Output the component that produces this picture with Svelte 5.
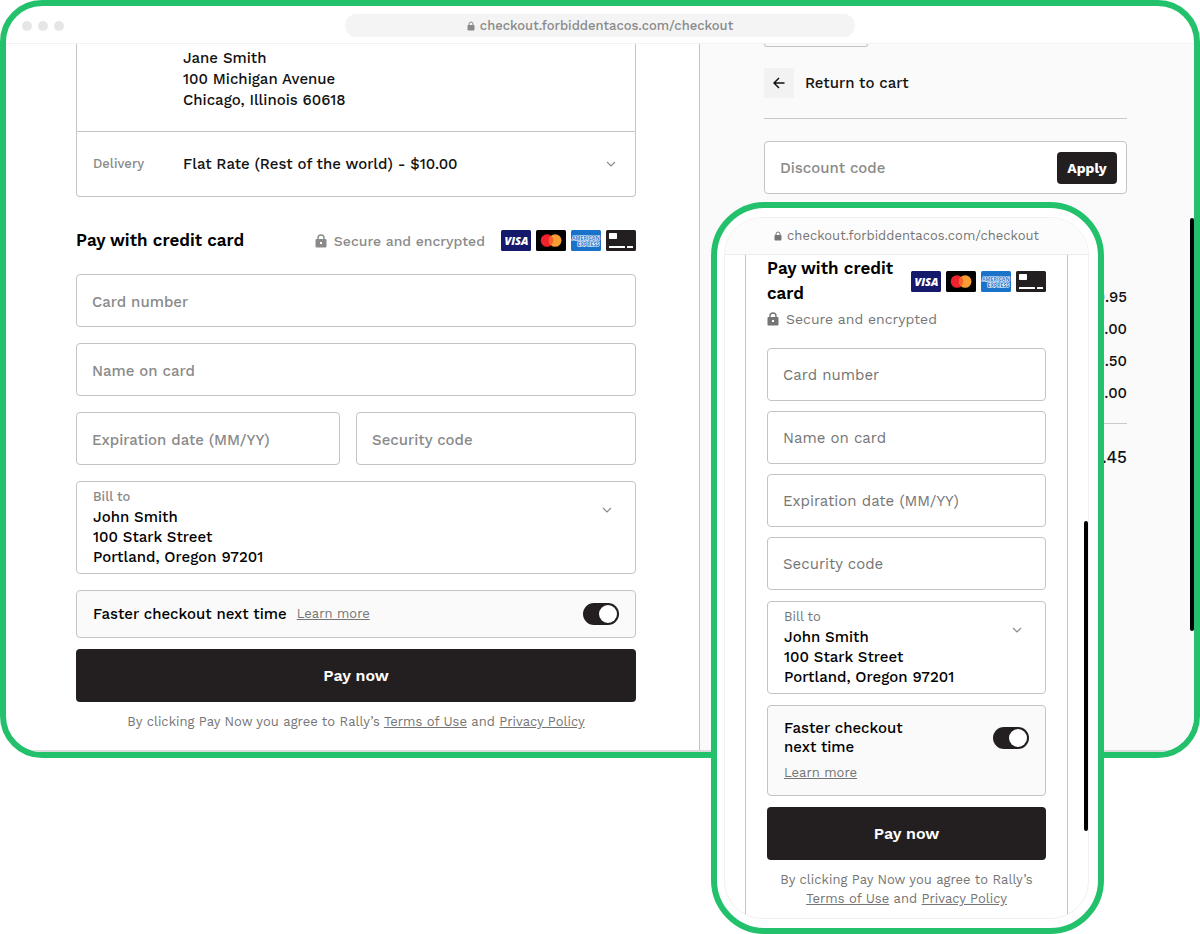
<script>
	const address = 'checkout.forbiddentacos.com/checkout'
	const prices = ['9.95', '0.00', '5.50', '0.00']
	let fasterDesktop = true
	let fasterMobile = true
</script>

{#snippet lock()}
	<svg class="lock" viewBox="0 0 12 14" aria-hidden="true">
		<path d="M3 6V4a3 3 0 0 1 6 0v2" fill="none" stroke="currentColor" stroke-width="1.4" />
		<rect x="0.5" y="5" width="11" height="8.5" rx="1" fill="currentColor" />
		<rect x="5" y="8" width="2" height="2" fill="#fff" />
	</svg>
{/snippet}

{#snippet url()}
	<svg class="lockSmall" viewBox="0 0 8 10" aria-hidden="true">
		<path d="M2 5V3a2 2 0 0 1 4 0v2" fill="none" stroke="currentColor" stroke-width="1" />
		<rect x="0.5" y="4" width="7" height="5.5" rx="1" fill="currentColor" />
	</svg>
	<span>{address}</span>
{/snippet}

{#snippet chevron()}
	<svg class="chevron" viewBox="0 0 10 6" aria-hidden="true">
		<path d="M1 1l4 4 4-4" fill="none" stroke="#8a8a8a" stroke-width="1.2" />
	</svg>
{/snippet}

{#snippet brands()}
	<div class="brands">
		<svg viewBox="0 0 30 21" role="img" aria-label="Visa">
			<rect width="30" height="21" rx="1.5" fill="#15196b" />
			<text x="15.5" y="14.5" text-anchor="middle" font-size="11" font-weight="800" font-style="italic" fill="#fff">VISA</text>
		</svg>
		<svg viewBox="0 0 30 21" role="img" aria-label="Mastercard">
			<rect width="30" height="21" rx="1.5" fill="#000" />
			<circle cx="11" cy="10.5" r="6.3" fill="#f0222b" />
			<circle cx="19.2" cy="10.5" r="6.3" fill="#f89d33" />
			<path d="M15.1 5.7a6.3 6.3 0 0 1 0 9.6a6.3 6.3 0 0 1 0-9.6z" fill="#f4602a" />
		</svg>
		<svg viewBox="0 0 30 21" role="img" aria-label="American Express">
			<rect width="30" height="21" rx="1.5" fill="#1b73c9" />
			<g font-size="5.2" font-weight="700" fill="#1b73c9" stroke="#fff" stroke-width="1.2" paint-order="stroke">
				<text x="1" y="9.6">AMERICAN</text>
				<text x="6.5" y="15.6">EXPRESS</text>
			</g>
		</svg>
		<svg viewBox="0 0 30 21" role="img" aria-label="Other card">
			<rect width="30" height="21" rx="1.5" fill="#231f20" />
			<rect x="3" y="3" width="8" height="6" rx="0.7" fill="#fff" />
			<rect x="3" y="16" width="16" height="2" rx="0.5" fill="#fff" />
			<rect x="21" y="16" width="6" height="2" rx="0.5" fill="#fff" />
		</svg>
	</div>
{/snippet}

{#snippet cardFields()}
	<div class="fields">
		<input class="field wide" type="text" placeholder="Card number" aria-label="Card number" />
		<input class="field wide" type="text" placeholder="Name on card" aria-label="Name on card" />
		<input class="field" type="text" placeholder="Expiration date (MM/YY)" aria-label="Expiration date" />
		<input class="field" type="text" placeholder="Security code" aria-label="Security code" />
	</div>
	<button type="button" class="billTo" aria-haspopup="listbox">
		<span>
			<span class="small">Bill to</span>
			<span class="address">John Smith<br />100 Stark Street<br />Portland, Oregon 97201</span>
		</span>
		{@render chevron()}
	</button>
{/snippet}

{#snippet terms()}
	<p class="terms">
		By clicking Pay Now you agree to Rally’s <a href="#terms">Terms of Use</a> and <a href="#privacy">Privacy Policy</a>
	</p>
{/snippet}

<div class="stage">
	<section class="browser">
		<header class="toolbar">
			<div class="dots"><i></i><i></i><i></i></div>
			<div class="urlPill">{@render url()}</div>
		</header>
		<div class="columns">
			<main class="checkout">
				<div class="summary">
					<div class="shipTo">Jane Smith<br />100 Michigan Avenue<br />Chicago, Illinois 60618</div>
					<div class="delivery">
						<label class="small" for="delivery">Delivery</label>
						<select id="delivery">
							<option>Flat Rate (Rest of the world) - $10.00</option>
						</select>
						{@render chevron()}
					</div>
				</div>
				<form class="payment">
					<div class="payHead">
						<h2>Pay with credit card</h2>
						<span class="secure">{@render lock()}Secure and encrypted</span>
						{@render brands()}
					</div>
					{@render cardFields()}
					<div class="faster">
						<div class="fasterText">
							<label for="faster-desktop">Faster checkout next time</label>
							<a href="#learn">Learn more</a>
						</div>
						<input id="faster-desktop" class="toggle" type="checkbox" role="switch" bind:checked={fasterDesktop} />
					</div>
					<button type="button" class="pay">Pay now</button>
				</form>
				{@render terms()}
			</main>
			<aside class="order">
				<div class="cutBox"></div>
				<a class="back" href="#cart">
					<span class="backIcon">
						<svg viewBox="0 0 12 12" aria-hidden="true">
							<path d="M11.5 6H1M6 1L1 6l5 5" fill="none" stroke="#111" stroke-width="1.5" />
						</svg>
					</span>
					Return to cart
				</a>
				<hr />
				<div class="discount">
					<input type="text" placeholder="Discount code" aria-label="Discount code" />
					<button type="button">Apply</button>
				</div>
				<div class="prices">
					{#each prices as price}
						<span>{price}</span>
					{/each}
				</div>
				<hr />
				<div class="total">3.45</div>
			</aside>
		</div>
		<div class="scrollbar"></div>
	</section>

	<section class="phone">
		<div class="screen">
			<header class="phoneUrl">{@render url()}</header>
			<div class="phoneBody">
				<form class="payment">
					<div>
						<div class="payHead">
							<h2>Pay with credit card</h2>
							{@render brands()}
						</div>
						<span class="secure">{@render lock()}Secure and encrypted</span>
					</div>
					{@render cardFields()}
					<div class="faster">
						<div class="fasterText">
							<label for="faster-mobile">Faster checkout next time</label>
							<a href="#learn">Learn more</a>
						</div>
						<input id="faster-mobile" class="toggle" type="checkbox" role="switch" bind:checked={fasterMobile} />
					</div>
					<button type="button" class="pay">Pay now</button>
				</form>
				{@render terms()}
			</div>
		</div>
		<div class="scrollbar"></div>
	</section>
</div>

<style>
	:global(body) {
		background: #fff;
	}
	.stage {
		display: grid;
		align-items: start;
		font-family: 'Work Sans', Inter, sans-serif;
		font-size: 15px;
		font-weight: 500;
		line-height: 20px;
		color: #111;
	}
	.stage * {
		box-sizing: border-box;
	}
	input,
	button,
	select {
		font: inherit;
		color: inherit;
		margin: 0;
	}
	.browser,
	.phone {
		grid-area: 1 / 1;
		position: relative;
		box-sizing: border-box;
		border: 6px solid #23c16b;
		background: #fff;
		overflow: hidden;
	}
	.browser {
		border-radius: 42px;
	}
	.toolbar {
		display: grid;
		grid-template-columns: 1fr 43% 1fr;
		align-items: center;
		padding: 8px 0 6px;
		border-bottom: 1px solid #f2f2f2;
	}
	.dots {
		display: flex;
		gap: 6px;
		padding-left: 16px;
	}
	.dots i {
		width: 10px;
		height: 10px;
		border-radius: 50%;
		background: #e6e6e6;
	}
	.urlPill,
	.phoneUrl {
		display: flex;
		align-items: center;
		justify-content: center;
		gap: 5px;
		font-size: 13px;
		color: #8a8a8a;
	}
	.urlPill {
		height: 23px;
		border-radius: 12px;
		background: #f4f4f4;
	}
	.lockSmall {
		width: 8px;
		height: 10px;
	}
	.columns {
		display: grid;
		grid-template-columns: 7fr 5fr;
		border-bottom: 2px solid #d9dbda;
	}
	.checkout {
		padding: 0 63px 19px 70px;
	}
	.summary {
		border: 1px solid #c4c4c4;
		border-top: 0;
		border-radius: 0 0 4px 4px;
	}
	.shipTo {
		padding: 4px 16px 20px 106px;
		line-height: 21px;
		border-bottom: 1px solid #c4c4c4;
	}
	.delivery {
		display: grid;
		grid-template-columns: 90px 1fr auto;
		align-items: center;
		height: 64px;
		padding: 0 19px 0 16px;
	}
	.delivery select {
		appearance: none;
		padding: 0;
		border: 0;
		background: none;
	}
	.small {
		display: block;
		font-size: 13px;
		color: #8a8a8a;
	}
	.chevron {
		width: 10px;
		height: 6px;
	}
	.payment {
		display: flex;
		flex-direction: column;
	}
	.payHead {
		display: flex;
		align-items: center;
		gap: 16px;
	}
	.checkout .payHead {
		padding: 31px 0 21px;
	}
	h2 {
		flex: 1;
		margin: 0;
		font-size: 17px;
		font-weight: 600;
		line-height: 25px;
		color: #000;
	}
	.secure {
		display: flex;
		align-items: center;
		gap: 7px;
		font-size: 14px;
		color: #8a8a8a;
	}
	.lock {
		width: 12px;
		height: 14px;
	}
	.brands {
		display: flex;
		gap: 5px;
	}
	.brands svg {
		width: 30px;
		height: 21px;
		font-family: 'Open Sans', sans-serif;
	}
	.fields {
		display: grid;
		grid-template-columns: 33fr 35fr;
		gap: 16px;
	}
	.wide {
		grid-column: 1 / -1;
	}
	.field {
		width: 100%;
		min-width: 0;
		height: 53px;
		padding: 2px 15px 0;
		border: 1px solid #c4c4c4;
		border-radius: 4px;
		background: #fff;
	}
	input::placeholder {
		color: #8a8a8a;
		opacity: 1;
	}
	.billTo {
		display: flex;
		justify-content: space-between;
		margin: 16px 0;
		padding: 5px 23px 6px 16px;
		border: 1px solid #c4c4c4;
		border-radius: 4px;
		background: #fff;
		text-align: left;
	}
	.address {
		display: block;
		color: #000;
	}
	.billTo .chevron {
		margin-top: 20px;
	}
	.faster {
		display: flex;
		align-items: center;
		justify-content: space-between;
		padding: 12px 16px;
		border: 1px solid #c4c4c4;
		border-radius: 4px;
		background: #fafafa;
		color: #000;
	}
	.fasterText {
		display: flex;
		gap: 10px;
	}
	a {
		color: #757575;
	}
	.fasterText a {
		font-size: 13px;
		font-weight: 400;
	}
	.toggle {
		appearance: none;
		display: flex;
		width: 36px;
		height: 22px;
		padding: 2px;
		border-radius: 11px;
		background: #999;
	}
	.toggle:checked {
		justify-content: flex-end;
		background: #231f20;
	}
	.toggle::before {
		content: '';
		width: 18px;
		height: 18px;
		border-radius: 50%;
		background: #fff;
	}
	.pay {
		height: 53px;
		margin-top: 11px;
		border: 0;
		border-radius: 4px;
		background: #231f20;
		color: #fff;
		font-size: 16px;
		font-weight: 600;
	}
	.terms {
		margin: 10px 0 0;
		font-size: 13px;
		font-weight: 400;
		text-align: center;
		color: #757575;
	}
	.checkout .terms {
		margin-bottom: -1px;
	}
	.order {
		padding: 0 67px 0 64px;
		border-left: 1px solid #c4c4c4;
		background: #fafafa;
	}
	.cutBox {
		width: 104px;
		height: 3px;
		border: 1px solid #c4c4c4;
		border-top: 0;
		border-radius: 0 0 4px 4px;
	}
	.back {
		display: flex;
		align-items: center;
		gap: 11px;
		margin: 21px 0 20px;
		color: #111;
		text-decoration: none;
	}
	.backIcon {
		display: grid;
		place-items: center;
		width: 30px;
		height: 30px;
		background: #f2f2f2;
	}
	.backIcon svg {
		width: 12px;
		height: 12px;
	}
	hr {
		margin: 0;
		border: 0;
		border-top: 1px solid #c9c9c9;
	}
	.discount {
		display: flex;
		align-items: center;
		height: 53px;
		margin: 22px 0 93px;
		padding: 0 9px 0 15px;
		border: 1px solid #c4c4c4;
		border-radius: 4px;
		background: #fff;
	}
	.discount input {
		flex: 1;
		min-width: 0;
		padding: 0;
		border: 0;
		background: none;
	}
	.discount button {
		width: 60px;
		height: 32px;
		padding: 0;
		border: 0;
		border-radius: 4px;
		background: #231f20;
		color: #fff;
		font-size: 14px;
		font-weight: 700;
	}
	.prices {
		display: flex;
		flex-direction: column;
		gap: 12px;
		padding-bottom: 20px;
		text-align: right;
	}
	.total {
		padding-top: 23px;
		font-size: 17px;
		text-align: right;
	}
	.scrollbar {
		position: absolute;
		width: 4px;
		border-radius: 2px;
		background: #000;
	}
	.browser .scrollbar {
		top: 212px;
		right: 0;
		height: 413px;
	}
	.phone .scrollbar {
		top: 313px;
		right: 10px;
		height: 310px;
	}
	.phone {
		justify-self: end;
		width: 393px;
		margin: 202px 96px 0 0;
		padding: 9px 9px 9px 7px;
		border-radius: 54px;
	}
	.screen {
		border: 1px solid #f0f0f0;
		border-radius: 38px;
		overflow: hidden;
	}
	.phoneUrl {
		height: 37px;
		border-bottom: 1px solid #ececec;
		background: #fcfcfc;
	}
	.phoneBody {
		margin: 0 20px;
		padding: 1px 21px 10px;
		border: 1px solid #c4c4c4;
		border-width: 0 1px;
	}
	.phone .payHead {
		gap: 8px;
	}
	.phoneUrl,
	.phone .secure,
	.phone .small,
	.phone input::placeholder {
		font-weight: 400;
		color: #757575;
	}
	.phone .secure {
		height: 26px;
		margin-bottom: 16px;
	}
	.phone .fields {
		grid-template-columns: 1fr;
		gap: 10px;
	}
	.phone .field {
		padding-top: 0;
	}
	.phone .billTo {
		margin: 11px 0;
	}
	.phone .faster {
		align-items: flex-start;
		padding: 13px 16px;
	}
	.phone .fasterText {
		flex-direction: column;
		gap: 6px;
		width: 130px;
		line-height: 19px;
	}
	.phone .toggle {
		margin-top: 8px;
	}
	.phone .terms {
		line-height: 19px;
	}
</style>
